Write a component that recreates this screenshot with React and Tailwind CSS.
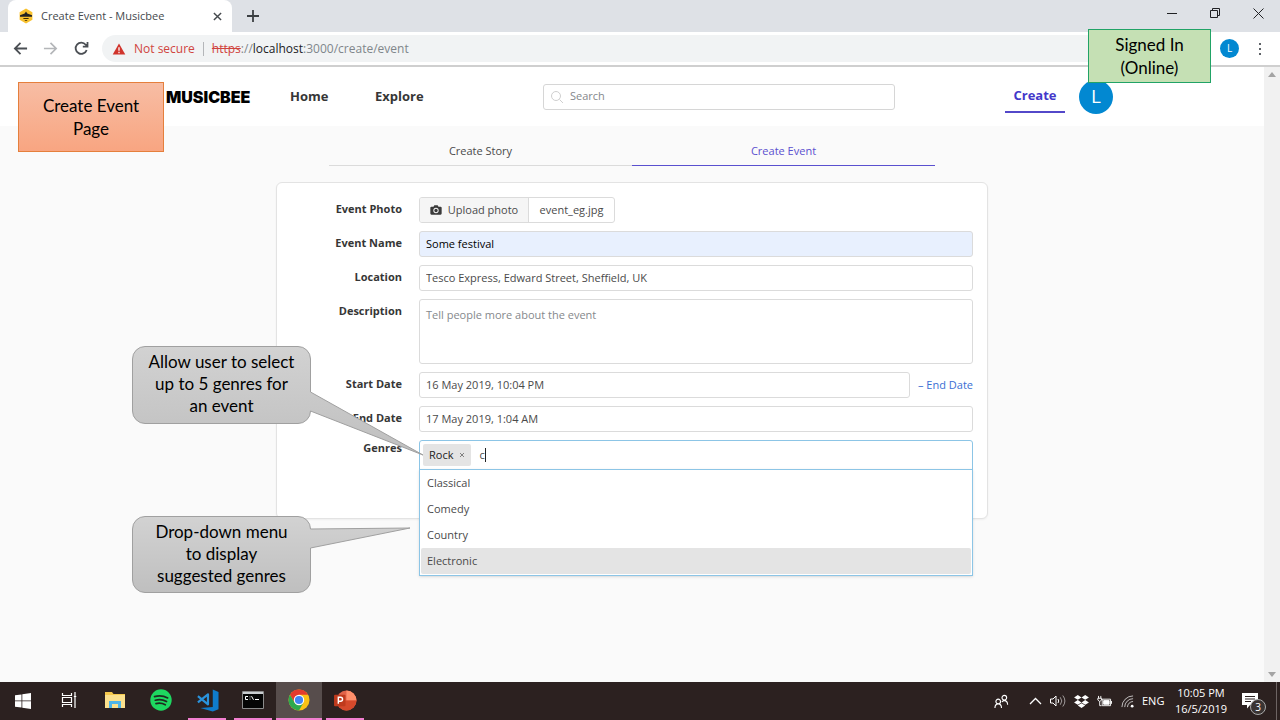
import React from "react";

const pageFont = "font-['Open_Sans','Noto_Sans',sans-serif]";
const field =
  "block h-[26px] w-full min-w-0 rounded-[3px] border border-[#dbdbdb] px-1.5 pb-0.5 text-[11px] outline-none";

function BeeIcon() {
  return (
    <svg viewBox="0 0 16 16" className="size-4 shrink-0" aria-hidden="true">
      <path d="M8 .6 14.4 4.2v7.6L8 15.4 1.6 11.8V4.2Z" fill="#f9c22e" />
      <path d="M8 3.6 9.3 5.6 14 7.3v1.5H2V7.3l4.7-1.7Z" fill="#222" />
      <path d="M5.4 10h5.2v.9H5.4zM6.8 12h2.4v.8H6.8z" fill="#3a2c00" />
    </svg>
  );
}

function Icon({ d, className, size = "0 0 24 24", w = 2 }) {
  return (
    <svg viewBox={size} className={className} fill="none" stroke="currentColor" strokeWidth={w} aria-hidden="true">
      <path d={d} />
    </svg>
  );
}

function TabStrip() {
  return (
    <div className="flex h-8 items-stretch bg-[#dee1e6] pl-2 text-[#202124]">
      <div className="flex w-56 items-center rounded-t-lg bg-white pr-2.5 pl-2.5">
        <BeeIcon />
        <span className="ml-[7px] flex-1 text-[11px] whitespace-nowrap text-[#45494d]">Create Event - Musicbee</span>
        <button aria-label="Close tab">
          <Icon d="M1 1l8 8M9 1l-8 8" size="0 0 10 10" w={1.6} className="size-[9px] text-[#45494d]" />
        </button>
      </div>
      <button aria-label="New tab" className="ml-[15px]">
        <Icon d="M6 0v12M0 6h12" size="0 0 12 12" w={1.8} className="size-3 text-[#3c4043]" />
      </button>
      <div className="ml-auto flex items-center pr-4 pb-1.5">
        <button aria-label="Minimize" className="mr-[33px]">
          <Icon d="M0 5.5h10" size="0 0 10 10" w={1} className="size-[10px]" />
        </button>
        <button aria-label="Restore" className="mr-[33px]">
          <Icon d="M.5 2.5h7v7h-7zM2.5 2.5v-2h7v7h-2" size="0 0 10 10" w={1} className="size-[10px]" />
        </button>
        <button aria-label="Close window">
          <Icon d="M.5.5l10 10M10.5.5l-10 10" size="0 0 11 11" w={1} className="size-[11px]" />
        </button>
      </div>
    </div>
  );
}

function Toolbar() {
  return (
    <div className="flex h-[35px] items-center border-b-2 border-[#cfcfcf] bg-white pl-[13px] text-[#5f6368]">
      <button aria-label="Back">
        <Icon d="M15 8H2M8 2L2 8l6 6" size="0 0 16 16" w={1.9} className="size-[15px] text-[#4b4f54]" />
      </button>
      <button aria-label="Forward" className="ml-[15px]">
        <Icon d="M1 8h13M8 2l6 6-6 6" size="0 0 16 16" w={1.8} className="size-[15px] text-[#b4b6b9]" />
      </button>
      <button aria-label="Reload" className="ml-4">
        <Icon d="M13.5 9.500A6 6 0 1 1 12.500 4L14 5.500M14.400 1v5h-5" size="0 0 16 16" w={1.9} className="size-[15px] text-[#4b4f54]" />
      </button>
      <div className="ml-[13px] flex h-[27px] min-w-0 flex-1 items-center rounded-full bg-[#f1f3f4] pl-2.5 text-[12px] whitespace-nowrap">
        <svg viewBox="0 0 14 13" className="h-[12px] w-[14px]" aria-hidden="true">
          <path d="M7 .5 13.800 12.500H.2Z" fill="#d0342c" />
          <path d="M6.300 4.500h1.400v4H6.300zM6.300 9.500h1.400V11H6.300z" fill="#fff" />
        </svg>
        <span className="ml-2 text-[#d0443e]">Not secure</span>
        <span className="mx-2 h-3.5 w-px bg-[#b4b6b9]" />
        <span className="text-[#80868b]">
          <span className="text-[#d0443e] line-through">https</span>://<span className="text-[#202124]">localhost</span>
          :3000/create/event
        </span>
      </div>
      <button className="mr-5 ml-[15px] size-[19px] rounded-full bg-[#0288d1] text-[10px] text-white">L</button>
      <button aria-label="Browser menu" className="mr-[19px] flex flex-col gap-[3px]">
        <i className="size-[2px] bg-[#5f6368]" />
        <i className="size-[2px] bg-[#5f6368]" />
        <i className="size-[2px] bg-[#5f6368]" />
      </button>
    </div>
  );
}

function SiteHeader() {
  return (
    <header className="bg-white">
      <div className="mx-auto flex h-[59px] max-w-[962px] items-center pl-[15px]">
        <a href="#" className="w-[124px] font-[Inter,sans-serif] text-[16px] leading-4 font-black text-black">
          MUSICBEE
        </a>
        <nav className="flex flex-1 pt-px text-[13px] font-bold text-[#363636]">
          <a href="#" className="w-[85px]">Home</a>
          <a href="#">Explore</a>
        </nav>
        <label className="flex h-[26px] w-[352px] items-center rounded-[3px] border border-[#d6d6d6] bg-white pl-1.5">
          <Icon d="M9.5 9.500 13 13M10.500 6A4.500 4.500 0 1 1 1.500 6a4.500 4.500 0 0 1 9 0Z" size="0 0 14 14" w={1} className="size-[14px] text-[#cfcfcf]" />
          <input aria-label="Search" placeholder="Search" className="ml-1.5 min-w-0 flex-1 text-[11px] outline-none placeholder:text-[#85888c]" />
        </label>
        <a href="#" className="ml-[110px] flex h-8 w-[60px] items-center justify-center border-b-2 border-[#5348c9] text-[13px] font-bold text-[#4338ca]">
          Create
        </a>
        <button className="ml-3.5 size-[34px] rounded-full bg-[#0288d1] text-[19px] text-white">L</button>
      </div>
    </header>
  );
}

function Row({ label, id, children, tight }) {
  return (
    <div className="grid grid-cols-[111px_minmax(0,1fr)] gap-x-[17px]">
      <label htmlFor={id} className={"text-right font-bold text-[#363636] " + (tight ? "leading-4" : "leading-6")}>
        {label}
      </label>
      {children}
    </div>
  );
}

function EventForm() {
  return (
    <form className="mx-auto mt-4 flex w-full max-w-[712px] flex-col gap-2 rounded-md border border-[#e3e3e3] bg-white px-3.5 pt-3.5 pb-12 text-[11px] text-[#4a4a4a] shadow-xs">
      <Row label="Event Photo" id="photo">
        <div className="flex h-[26px] w-[196px] overflow-hidden rounded-[3px] border border-[#dbdbdb] leading-6">
          <button type="button" id="photo" className="flex w-[109px] items-center justify-center gap-1.5 border-r border-[#dbdbdb] bg-[#f5f5f5] whitespace-nowrap">
            <svg viewBox="0 0 14 12" className="h-[10px] w-[12px]" aria-hidden="true">
              <path fillRule="evenodd" d="M1.500 2H4l1-1.800h4L10 2h2.500A1.300 1.300 0 0 1 13.800 3.300v7A1.300 1.300 0 0 1 12.500 11.600h-11A1.300 1.300 0 0 1 .2 10.300v-7A1.300 1.300 0 0 1 1.500 2ZM7 3.400a3.200 3.200 0 1 0 0 6.400 3.200 3.200 0 0 0 0-6.400Z" fill="#3a3a3a" />
              <circle cx="7" cy="6.600" r="2" fill="#3a3a3a" />
            </svg>
            Upload photo
          </button>
          <span className="flex-1 text-center">event_eg.jpg</span>
        </div>
      </Row>
      <Row label="Event Name" id="name">
        <input id="name" defaultValue="Some festival" className={field + " bg-[#e8f0fe] text-black"} />
      </Row>
      <Row label="Location" id="location">
        <input id="location" defaultValue="Tesco Express, Edward Street, Sheffield, UK" className={field + " bg-white"} />
      </Row>
      <Row label="Description" id="description">
        <textarea id="description" placeholder="Tell people more about the event" className="block h-[65px] w-full resize-none rounded-[3px] border border-[#dbdbdb] px-1.5 py-[7px] text-[11px] leading-4 outline-none placeholder:text-[#85888c]" />
      </Row>
      <Row label="Start Date" id="start">
        <div className="flex items-center gap-2">
          <input id="start" defaultValue="16 May 2019, 10:04 PM" className={field + " bg-white"} />
          <button type="button" className="shrink-0 text-[#3b6fd4]">– End Date</button>
        </div>
      </Row>
      <Row label="End Date" id="end">
        <input id="end" defaultValue="17 May 2019, 1:04 AM" className={field + " bg-white"} />
      </Row>
      <Row label="Genres" id="genres" tight>
        <div className="relative">
          <div className="flex h-[30px] items-center rounded-t-[3px] border border-[#8cc5e6] bg-white pl-[3px]">
            <span className="flex h-[22px] items-center gap-1.5 rounded-[2px] bg-[#e4e4e4] px-1.5 text-[#222]">
              Rock
              <button type="button" aria-label="Remove Rock">
                <Icon d="M1 1l4 4M5 1L1 5" size="0 0 6 6" w={0.7} className="size-[6px] text-[#555]" />
              </button>
            </span>
            <span className="ml-2 flex flex-1 items-center">
              <input id="genres" defaultValue="c" className="w-1.5 outline-none" />
              <i className="h-3.5 w-px bg-[#222]" />
            </span>
          </div>
          <ul className="absolute inset-x-0 top-[29px] z-10 border border-[#8cc5e6] bg-white px-px pb-px leading-[26px] shadow-sm">
            <li className="px-1.5">Classical</li>
            <li className="px-1.5">Comedy</li>
            <li className="px-1.5">Country</li>
            <li className="rounded-[2px] bg-[#e4e4e4] px-1.5">Electronic</li>
          </ul>
        </div>
      </Row>
    </form>
  );
}

function Callout({ d, id, box, lines }) {
  return (
    <aside className={"absolute z-20 font-[Lato,sans-serif] text-[17px] leading-[22px] text-black " + box}>
      <svg viewBox="0 0 292 110" className="absolute top-0 left-0 h-[110px] w-[292px]" aria-hidden="true">
        <defs>
          <linearGradient id={id} x1="0" y1="0" x2="0" y2="1">
            <stop offset="0" stopColor="#d2d2d2" />
            <stop offset="1" stopColor="#bfbfbf" />
          </linearGradient>
        </defs>
        <path d={d} fill={"url(#" + id + ")"} stroke="#a0a0a0" />
      </svg>
      <p className="relative w-[179px] pt-[5px] text-center whitespace-nowrap">
        {lines.map((t) => (
          <span key={t} className="block">{t}</span>
        ))}
      </p>
    </aside>
  );
}

function TaskButton({ label, running, active, children }) {
  return (
    <button aria-label={label} className={"flex h-full w-[46px] flex-col items-center " + (active ? "bg-[#574d4c]" : "")}>
      <span className="flex flex-1 items-center">{children}</span>
      <span className={"h-0.5 " + (active ? "w-full " : "w-[38px] ") + (running ? "bg-[#f27fd0]" : "")} />
    </button>
  );
}

function Taskbar() {
  return (
    <footer className="flex h-[38px] shrink-0 items-center bg-[#2c2120] text-white">
      <button aria-label="Start" className="flex w-[46px] justify-center">
        <svg viewBox="0 0 16 16" className="size-4" fill="#fff" aria-hidden="true">
          <path d="M0 2.300 6.500 1.400v6.100H0zM7.300 1.300 16 0v7.500H7.300zM0 8.300h6.500v6.300L0 13.700zM7.300 8.300H16V16l-8.700-1.300z" />
        </svg>
      </button>
      <TaskButton label="Task view">
        <Icon d="M1.5 1v2.500h9V1M1.500 15v-2.500h9V15M1.500 5.500h9v5h-9zM14 0v16M12.800 4.500h2.500" size="0 0 16 16" w={1.2} className="size-4" />
      </TaskButton>
      <TaskButton label="File Explorer">
        <svg viewBox="0 0 20 18" className="h-[18px] w-5" aria-hidden="true">
          <path d="M0 1h7l1.500 2H20v14H0z" fill="#f5c84c" />
          <path d="M0 4h20v13H0z" fill="#fbe08c" />
          <path d="M4 10h12v7h-3v-4H7v4H4z" fill="#4db4e8" />
        </svg>
      </TaskButton>
      <TaskButton label="Spotify">
        <svg viewBox="0 0 22 22" className="size-[22px]" aria-hidden="true">
          <circle cx="11" cy="11" r="10.700" fill="#1ed760" />
          <path d="M4.500 7.600q7-2 13.200 1.300M5.300 11.200q6-1.600 11.200 1.300M6 14.600q5-1.200 9.300 1.200" fill="none" stroke="#1f2a20" strokeWidth="1.700" strokeLinecap="round" />
        </svg>
      </TaskButton>
      <TaskButton label="Visual Studio Code" running>
        <svg viewBox="0 0 24 24" className="size-[23px]" aria-hidden="true">
          <path d="M17.500.5 23.500 3v18l-6 2.500L4.500 19.800l13-1Z" fill="#0f7ccc" />
          <path d="M2 7.500 12.500 16V5.500L2 14" fill="none" stroke="#2a93dc" strokeWidth="2.300" strokeLinejoin="round" />
        </svg>
      </TaskButton>
      <TaskButton label="Command Prompt" running>
        <svg viewBox="0 0 22 18" className="h-[18px] w-[22px]" aria-hidden="true">
          <path d="M.5.5h21v17H.5z" fill="#050505" stroke="#8b8b8b" />
          <path d="M1 1h20v2H1z" fill="#c9cdd0" />
          <path d="M6 5.500H3.500v3H6M8 5.500v.8M8 7.700v.8M9.500 5.200l2 3.600M13 8.500h4" fill="none" stroke="#fff" />
        </svg>
      </TaskButton>
      <TaskButton label="Google Chrome" running active>
        <svg viewBox="0 0 22 22" className="size-[22px]" aria-hidden="true">
          <circle cx="11" cy="11" r="10.500" fill="#fbc116" />
          <path d="M1.900 5.800A10.500 10.500 0 0 1 20.100 5.800H11L6.500 13.600Z" fill="#e33b2e" />
          <path d="M1.900 5.800 6.500 13.600 11 16.200 15.500 13.600 11 21.500A10.500 10.500 0 0 1 1.900 5.800Z" fill="#2da94f" />
          <circle cx="11" cy="11" r="5.200" fill="#fff" />
          <circle cx="11" cy="11" r="4.100" fill="#4285f4" />
        </svg>
      </TaskButton>
      <TaskButton label="PowerPoint" running>
        <svg viewBox="0 0 24 22" className="h-[21px] w-[23px]" aria-hidden="true">
          <circle cx="13" cy="11" r="10.500" fill="#e2644a" />
          <path d="M13 .5A10.500 10.500 0 0 1 23.500 11H13Z" fill="#ff8f6b" />
          <path d="M2.500 11h21A10.500 10.500 0 0 1 2.500 11" fill="#d5492b" />
          <rect x="0" y="5" width="12" height="12" rx="1" fill="#bf3a1d" />
          <path d="M4.500 14.500v-7h2.300a2 2 0 0 1 0 4.200H4.500" fill="none" stroke="#fff" strokeWidth="1.500" />
        </svg>
      </TaskButton>

      <div className="ml-auto flex items-center text-[11px]">
        <Icon d="M1 15c0-3 1.500-4.500 3.500-4.500S8 12 8 15M7 8a2.500 2.500 0 1 1-5 0 2.500 2.500 0 0 1 5 0M8.500 8.500C9 7.500 10 7 11 7c2 0 3.500 1.500 3.500 4.500M13.500 4a2.500 2.500 0 1 1-5 0 2.500 2.500 0 0 1 5 0" size="0 0 16 16" w={1.2} className="size-[15px]" />
        <Icon d="M1 7l5.500-5.500L12 7" size="0 0 13 8" w={1.3} className="ml-5 h-2 w-[13px]" />
        <svg viewBox="0 0 16 14" className="ml-2 h-3.5 w-4" fill="none" stroke="#fff" aria-hidden="true">
          <path d="M.5 5v4H3l3 3V2L3 5ZM8 5q1.500 2 0 4" />
          <path d="M10.300 3.300q3 3.700 0 7.400M12.800 1.500q4.200 5.500 0 11" opacity=".55" />
        </svg>
        <svg viewBox="0 0 16 14" className="ml-2 h-[13px] w-[15px]" fill="#fff" aria-hidden="true">
          <path d="M4 0 8 2.600 4 5.200 0 2.600ZM12 0l4 2.600-4 2.600-4-2.600ZM4 5.400 8 8l-4 2.600L0 8ZM12 5.400 16 8l-4 2.600L8 8ZM8 8.900l4 2.500L8 14l-4-2.600Z" />
        </svg>
        <svg viewBox="0 0 17 14" className="ml-2 h-[13px] w-4" fill="none" stroke="#fff" aria-hidden="true">
          <path d="M5.500 4.500h9v7h-9zM15.500 6.500v3M1.500 1v2.500M4 1v2.500M.8 3.500h4v2l-2 1.500-2-1.500ZM2.800 7v4.500h2" />
          <path d="M7 6h6v4H7z" fill="#fff" />
        </svg>
        <svg viewBox="0 0 14 14" className="ml-2 size-[13px]" fill="none" stroke="#fff" aria-hidden="true">
          <path d="M1 13A12 12 0 0 1 13 1M4 13a9 9 0 0 1 9-9M7 13a6 6 0 0 1 6-6" opacity=".75" />
          <circle cx="12" cy="12" r="1.500" fill="#fff" stroke="none" />
        </svg>
        <span className="ml-2 w-[26px]">ENG</span>
        <span className="flex w-[66px] flex-col items-center leading-4">
          <span>10:05 PM</span>
          <span>16/5/2019</span>
        </span>
        <button className="relative ml-2 flex size-6 items-center" aria-label="3 notifications">
          <svg viewBox="0 0 17 16" className="h-4 w-[17px]" aria-hidden="true">
            <path d="M0 0h16v12H8l-3 3.500V12H0z" fill="#fff" />
            <path d="M3 3.500h10M3 6h10M3 8.500h6" stroke="#2c2120" />
          </svg>
          <span className="absolute right-0 -bottom-0.5 size-4 rounded-full border border-[#aaa] bg-[#3a3433] text-center text-[10px] leading-3.5">3</span>
        </button>
        <span className="mr-[3px] ml-2.5 h-[38px] w-px bg-[#6d6463]" />
      </div>
    </footer>
  );
}

export default function App() {
  return (
    <div className={"relative flex min-h-screen flex-col bg-[#fafafa] " + pageFont}>
      <TabStrip />
      <Toolbar />
      <div className="flex flex-1">
        <main className="min-w-0 flex-1">
          <SiteHeader />
          <div className="mx-auto mt-[13px] grid max-w-[606px] grid-cols-2 text-center text-[11px] leading-6 text-[#4a4a4a]">
            <a href="#" className="border-b border-[#dbdbdb] pb-0.5">Create Story</a>
            <a href="#" className="border-b border-[#5a50cf] pb-0.5 text-[#5a50cf]">Create Event</a>
          </div>
          <EventForm />
        </main>
        <div className="flex w-4 flex-col items-center justify-between bg-[#f1f1f1] py-[5px]">
          <svg viewBox="0 0 8 5" className="h-[5px] w-2" aria-hidden="true"><path d="M0 5 4 0l4 5z" fill="#a3a3a3" /></svg>
          <svg viewBox="0 0 8 5" className="h-[5px] w-2" aria-hidden="true"><path d="M0 0h8L4 5z" fill="#a3a3a3" /></svg>
        </div>
      </div>
      <Taskbar />

      <aside className="absolute top-[82px] left-[18px] z-20 flex h-[70px] w-[146px] items-center justify-center border border-[#e57f3c] bg-linear-to-b from-[#f7bda4] to-[#f8a581] text-center font-[Lato,sans-serif] text-[17px] leading-[23px] text-black">
        <span>Create Event<br />Page</span>
      </aside>
      <aside className="absolute top-[29px] right-[69px] z-20 flex h-[54px] w-[123px] items-center justify-center border border-[#21a366] bg-[#c5e0b4] text-center font-[Lato,sans-serif] text-[17px] leading-[23px] text-black">
        <span>Signed In<br />(Online)</span>
      </aside>
      <Callout
        id="bubble-a"
        box="top-[346px] left-[132px]"
        d="M13 .5H166A12.500 12.500 0 0 1 178.500 13V46L291 109 178.500 65A12.500 12.500 0 0 1 166 77.500H13A12.500 12.500 0 0 1 .5 65V13A12.500 12.500 0 0 1 13 .5Z"
        lines={["Allow user to select", "up to 5 genres for", "an event"]}
      />
      <Callout
        id="bubble-b"
        box="top-[516px] left-[132px]"
        d="M13 .5H166A12.500 12.500 0 0 1 178.500 13L278 12 178.500 32V64A12.500 12.500 0 0 1 166 76.500H13A12.500 12.500 0 0 1 .5 64V13A12.500 12.500 0 0 1 13 .5Z"
        lines={["Drop-down menu", "to display", "suggested genres"]}
      />
    </div>
  );
}
